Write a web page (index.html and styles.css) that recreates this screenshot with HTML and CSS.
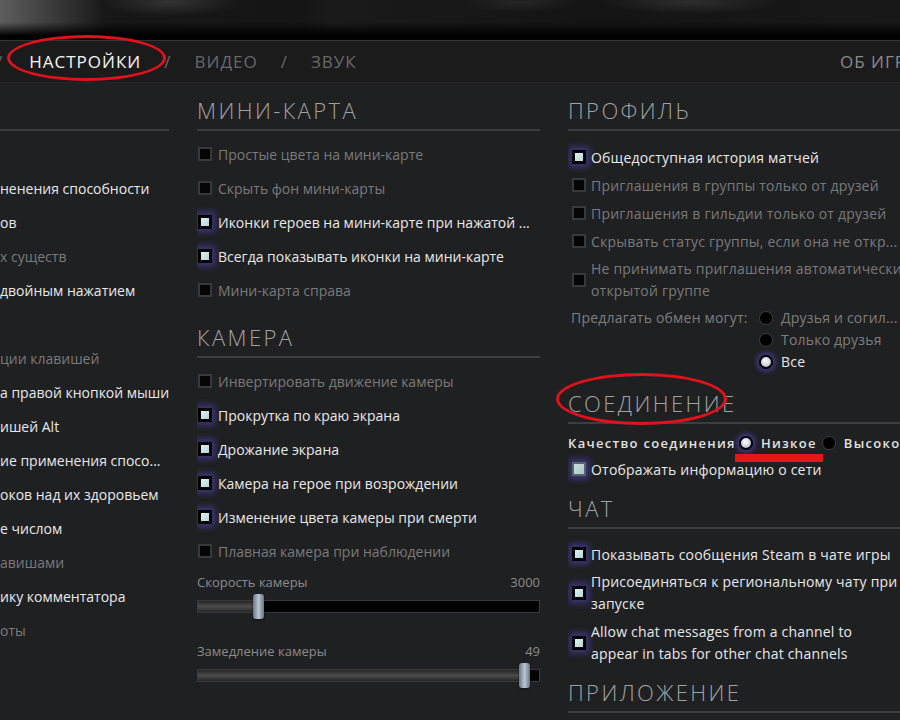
FILE: index.html
```html
<!DOCTYPE html>
<html lang="ru">
<head>
<meta charset="utf-8">
<title>Настройки</title>
<link rel="stylesheet" href="styles.css">
</head>
<body>
<div class="topimg"></div>
<nav class="tabs">
  <span class="sep first">/</span>
  <span class="tab active">НАСТРОЙКИ</span>
  <span class="sep">/</span>
  <span class="tab">ВИДЕО</span>
  <span class="sep">/</span>
  <span class="tab">ЗВУК</span>
  <span class="tab about">ОБ ИГРЕ</span>
</nav>
<main class="cols">
  <section class="col col-left">
    <h2 class="sec-title">&nbsp;</h2>
    <ul class="opts">
      <li class="opt"></li>
      <li class="opt on">ненения способности</li>
      <li class="opt on">ов</li>
      <li class="opt off">х существ</li>
      <li class="opt on">двойным нажатием</li>
      <li class="opt"></li>
      <li class="opt off">ции клавишей</li>
      <li class="opt on">а правой кнопкой мыши</li>
      <li class="opt on">ишей Alt</li>
      <li class="opt on">ие применения спосо...</li>
      <li class="opt on">оков над их здоровьем</li>
      <li class="opt on">е числом</li>
      <li class="opt off">авишами</li>
      <li class="opt on">ику комментатора</li>
      <li class="opt off">оты</li>
    </ul>
  </section>

  <section class="col col-mid">
    <h2 class="sec-title">МИНИ-КАРТА</h2>
    <ul class="opts">
      <li class="opt off"><span class="cb"></span>Простые цвета на мини-карте</li>
      <li class="opt off"><span class="cb"></span>Скрыть фон мини-карты</li>
      <li class="opt on"><span class="cb checked"></span>Иконки героев на мини-карте при нажатой ...</li>
      <li class="opt on"><span class="cb checked"></span>Всегда показывать иконки на мини-карте</li>
      <li class="opt off"><span class="cb"></span>Мини-карта справа</li>
    </ul>
    <h2 class="sec-title cam">КАМЕРА</h2>
    <ul class="opts">
      <li class="opt off"><span class="cb"></span>Инвертировать движение камеры</li>
      <li class="opt on"><span class="cb checked"></span>Прокрутка по краю экрана</li>
      <li class="opt on"><span class="cb checked"></span>Дрожание экрана</li>
      <li class="opt on"><span class="cb checked"></span>Камера на герое при возрождении</li>
      <li class="opt on"><span class="cb checked"></span>Изменение цвета камеры при смерти</li>
      <li class="opt off"><span class="cb"></span>Плавная камера при наблюдении</li>
    </ul>
    <div class="slider">
      <div class="slider-label"><span>Скорость камеры</span><span>3000</span></div>
      <div class="track"><div class="fill" style="width:17.5%"></div><div class="thumb" style="left:17.5%"></div></div>
    </div>
    <div class="slider second">
      <div class="slider-label"><span>Замедление камеры</span><span>49</span></div>
      <div class="track"><div class="fill" style="width:95.6%"></div><div class="thumb" style="left:95.6%"></div></div>
    </div>
  </section>

  <section class="col col-right">
    <h2 class="sec-title">ПРОФИЛЬ</h2>
    <ul class="plist">
      <li class="prow on"><span class="cb checked"></span>Общедоступная история матчей</li>
      <li class="prow off"><span class="cb"></span>Приглашения в группы только от друзей</li>
      <li class="prow off"><span class="cb"></span>Приглашения в гильдии только от друзей</li>
      <li class="prow off"><span class="cb"></span>Скрывать статус группы, если она не откр...</li>
      <li class="prow off multi"><span class="cb"></span><span class="txt">Не принимать приглашения автоматически в<br>открытой группе</span></li>
    </ul>
    <div class="trade">
      <span class="trade-label">Предлагать обмен могут:</span>
      <ul class="radios">
        <li><span class="rb"></span>Друзья и согил...</li>
        <li><span class="rb"></span>Только друзья</li>
        <li class="sel"><span class="rb on"></span>Все</li>
      </ul>
    </div>

    <h2 class="sec-title conn">СОЕДИНЕНИЕ</h2>
    <div class="quality">
      <span class="q-label">Качество соединения</span>
      <span class="rb on"></span><span class="q-opt">Низкое</span>
      <span class="rb"></span><span class="q-opt">Высокое</span>
    </div>
    <ul class="plist tight">
      <li class="prow on short"><span class="cb checked soft"></span>Отображать информацию о сети</li>
    </ul>

    <h2 class="sec-title chat">ЧАТ</h2>
    <ul class="plist chat-list">
      <li class="prow on"><span class="cb checked"></span>Показывать сообщения Steam в чате игры</li>
      <li class="prow on multi"><span class="cb checked"></span><span class="txt">Присоединяться к региональному чату при<br>запуске</span></li>
      <li class="prow on multi"><span class="cb checked"></span><span class="txt">Allow chat messages from a channel to<br>appear in tabs for other chat channels</span></li>
    </ul>
    <h2 class="sec-title app">ПРИЛОЖЕНИЕ</h2>
  </section>
</main>

<div class="ring ring-tab"></div>
<div class="ring ring-conn"></div>
<div class="underline"></div>
</body>
</html>
```

FILE: styles.css
```css
* { box-sizing: border-box; margin: 0; padding: 0; }

html, body {
  width: 900px;
  height: 720px;
  overflow: hidden;
  background: #1f2022;
}

body {
  position: relative;
  font-family: "Open Sans", "Noto Sans", sans-serif;
  color: #e6e6e6;
}

ul { list-style: none; }

/* blurred game image strip */
.topimg {
  height: 40px;
  background:
    linear-gradient(to bottom, rgba(0,0,0,0) 0, rgba(0,0,0,0) 55%, #000 90%, #050505 100%),
    radial-gradient(ellipse 70px 14px at 170px 2px, #333 0, rgba(40,40,40,0) 100%),
    radial-gradient(ellipse 90px 12px at 690px 2px, #2e2e2e 0, rgba(40,40,40,0) 100%),
    radial-gradient(ellipse 60px 10px at 520px 2px, #262626 0, rgba(40,40,40,0) 100%),
    linear-gradient(to right, #5e5e5e 0, #4a4a4a 30px, #2c2c2c 75px, #171717 105px, #151515 300px, #1a1a1a 330px, #141414 600px, #181818 900px);
}

.tabs {
  height: 42px;
  background: #1b1b1c;
  border-top: 1px solid #343434;
  display: flex;
  align-items: center;
  gap: 23px;
  font-size: 17px;
  letter-spacing: 1px;
  color: #686868;
  white-space: nowrap;
}
.sep.first { margin-left: -4px; }
.tab.active { color: #f4f4f4; margin-left: 3px; }
.tab.about {
  margin-left: auto;
  width: 60px;
  overflow: hidden;
  color: #8a8a8a;
}

.cols {
  display: grid;
  grid-template-columns: 169px 343px 332px;
  column-gap: 28px;
  height: 638px;
  padding-top: 14px;
  border-top: 1px solid #252527;
}

.col { overflow: hidden; }

.sec-title {
  font-size: 22px;
  font-weight: 300;
  line-height: 26px;
  letter-spacing: 2.4px;
  color: #a2a2a2;
  padding-bottom: 6px;
  border-bottom: 2px solid #3c3d40;
  white-space: nowrap;
}

.opts { margin-top: 6px; }

.opt {
  height: 34px;
  display: flex;
  align-items: center;
  gap: 6px;
  font-size: 14px;
  white-space: nowrap;
}

.on { color: #e9e9e9; }
.off { color: #7a7a7a; }

.col-mid .opt { padding-left: 1px; }
.sec-title.cam { margin-top: 17px; }

/* checkboxes */
.cb {
  flex: none;
  width: 14px;
  height: 14px;
  background: #050505;
  border: 2px solid #393939;
}
.cb.checked {
  border: 3px solid #000;
  background: linear-gradient(135deg, #e0f0f0, #b6d6d8);
  box-shadow: 0 0 6px 3px rgba(85, 75, 200, 0.55);
}
.cb.soft {
  border: 2px solid #5a6466;
  background: linear-gradient(135deg, #c8dede, #a9c6c6);
}

/* sliders */
.slider { margin-top: 6px; }
.slider.second { margin-top: 30px; }
.slider-label {
  display: flex;
  justify-content: space-between;
  font-size: 13px;
  line-height: 16px;
  color: #8b8b8b;
}
.track {
  position: relative;
  margin-top: 10px;
  height: 13px;
  border: 1px solid #3a3a3a;
  background: #030303;
}
.fill {
  height: 100%;
  background: linear-gradient(#262626, #4c4c4c 50%, #262626);
}
.thumb {
  position: absolute;
  top: -7px;
  width: 11px;
  height: 25px;
  margin-left: -5px;
  border-radius: 3px;
  background: linear-gradient(to right, #6a7582, #b9c5d2 50%, #6a7582);
  box-shadow: 0 1px 2px rgba(0,0,0,.6);
}

/* right column */
.plist { margin-top: 12px; padding-left: 4px; }
.prow {
  height: 28px;
  display: flex;
  align-items: center;
  gap: 5px;
  font-size: 14px;
  letter-spacing: 0.2px;
  white-space: nowrap;
}
.prow.multi {
  height: auto;
  padding: 3px 0;
  line-height: 22px;
}

.trade {
  display: flex;
  margin-top: 2px;
  padding-left: 3px;
  font-size: 14px;
  letter-spacing: 0.2px;
  line-height: 22px;
  color: #7e7e7e;
  white-space: nowrap;
}
.trade-label { width: 188px; flex: none; }
.radios li {
  height: 22px;
  display: flex;
  align-items: center;
  gap: 8px;
}
.radios li.sel { color: #e9e9e9; }

.rb {
  flex: none;
  width: 14px;
  height: 14px;
  border-radius: 50%;
  background: #000;
  border: 1px solid #3e3e3e;
}
.rb.on {
  border: 2px solid #050505;
  background: radial-gradient(circle at 45% 40%, #ffffff 0, #d8dce6 45%, #9aa0b0 100%);
  box-shadow: 0 0 4px 3px rgba(85, 75, 200, 0.55);
}

.sec-title.conn { margin-top: 17px; }

.quality {
  margin-top: 6px;
  height: 26px;
  display: flex;
  align-items: center;
  font-size: 13px;
  font-weight: 600;
  letter-spacing: 1.3px;
  color: #e2e2e2;
  white-space: nowrap;
}
.quality .rb { margin-left: 3px; }
.q-opt { margin-left: 8px; margin-right: 2px; }

.plist.tight { margin-top: 0; }
.prow.short { height: 26px; }

.sec-title.chat { margin-top: 13px; }
.plist.chat-list { margin-top: 11px; }
.sec-title.app { margin-top: 11px; }

/* red annotations */
.ring {
  position: absolute;
  border: 3px solid #e3121a;
  border-radius: 50%;
}
.ring-tab { left: 7px; top: 35px; width: 159px; height: 46px; }
.ring-conn { left: 556px; top: 373px; width: 171px; height: 52px; }
.underline {
  position: absolute;
  left: 735px;
  top: 454px;
  width: 88px;
  height: 8px;
  background: #e8141c;
}
```
